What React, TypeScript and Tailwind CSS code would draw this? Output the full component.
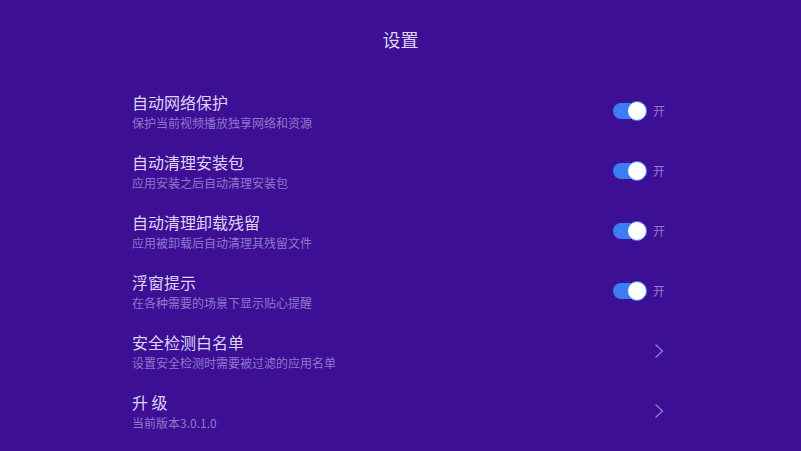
import React from 'react';

type Item = {
  title: string;
  desc: string;
  kind: 'toggle' | 'link';
};

const items: Item[] = [
  { title: '自动网络保护', desc: '保护当前视频播放独享网络和资源', kind: 'toggle' },
  { title: '自动清理安装包', desc: '应用安装之后自动清理安装包', kind: 'toggle' },
  { title: '自动清理卸载残留', desc: '应用被卸载后自动清理其残留文件', kind: 'toggle' },
  { title: '浮窗提示', desc: '在各种需要的场景下显示贴心提醒', kind: 'toggle' },
  { title: '安全检测白名单', desc: '设置安全检测时需要被过滤的应用名单', kind: 'link' },
  { title: '升 级', desc: '当前版本3.0.1.0', kind: 'link' },
];

function Toggle() {
  return (
    <div className="flex items-center">
      <div className="relative w-[34px] h-4 rounded-full bg-[#3b7cf5]">
        <div className="absolute right-0 top-1/2 -translate-y-1/2 w-[20px] h-[20px] rounded-full bg-white border border-[#3b7cf5]"></div>
      </div>
      <span className="ml-[6px] text-xs text-[#8f78cc]">开</span>
    </div>
  );
}

function Chevron() {
  return (
    <svg width="10" height="16" viewBox="0 0 10 16" className="mr-[1px]">
      <path d="M1.5 1.5 L8.5 8 L1.5 14.5" fill="none" stroke="#8f78cc" strokeWidth="1.4" />
    </svg>
  );
}

export default function App() {
  return (
    <div
      className="w-[801px] h-[451px] overflow-hidden bg-[#3c0f95]"
      style={{ fontFamily: '"Noto Sans CJK SC", "Noto Sans", sans-serif' }}
    >
      {/* Header */}
      <div className="h-[81px] pb-1 flex items-center justify-center">
        <h1 className="text-lg leading-6 text-[#ddd4f4]">设置</h1>
      </div>

      {/* Settings list */}
      <div className="ml-[132px] w-[533px]">
        {items.map((item) => (
          <div key={item.title} className="h-[60px] flex items-center">
            <div className="flex-1">
              <p className="text-base leading-5 text-[#ddd4f4] whitespace-pre">{item.title}</p>
              <p className="mt-[3px] text-xs leading-4 text-[#8f78cc]">{item.desc}</p>
            </div>
            {item.kind === 'toggle' ? <Toggle /> : <Chevron />}
          </div>
        ))}
      </div>
    </div>
  );
}
